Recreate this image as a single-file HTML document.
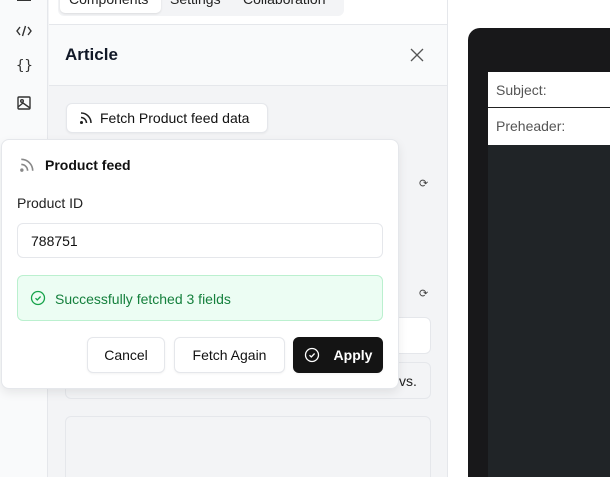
<!DOCTYPE html>
<html style="width:610px;height:477px;overflow:hidden"><head><style>
*{box-sizing:border-box;margin:0;padding:0}
body{width:610px;height:477px;overflow:hidden;background:#fff;font-family:"Liberation Sans",sans-serif;position:relative;color:#111}
.abs{position:absolute}
.btn{position:absolute;background:#fff;border:1px solid #e5e7eb;border-radius:6px;font-size:14px;display:flex;align-items:center;justify-content:center;box-shadow:0 1px 2px rgba(0,0,0,.05)}
</style></head><body>
<div class="abs" style="left:0;top:0;width:48px;height:477px;background:#f9fafb;border-right:1px solid #e5e7eb"></div>
<div class="abs" style="left:17px;top:-2px;width:14px;height:3px;border-bottom:2px solid #333"></div>
<svg class="abs" style="left:16px;top:24px" width="16" height="14" viewBox="0 0 16 14" fill="none" stroke="#333" stroke-width="1.4"><path d="M4 3L1 7l3 4M12 3l3 4-3 4M9.5 2L6.5 12"/></svg>
<div class="abs" style="left:16px;top:58px;font-size:14px;color:#333;font-family:'DejaVu Sans Mono',monospace">{}</div>
<svg class="abs" style="left:17px;top:96px" width="14" height="14" viewBox="0 0 14 14" fill="none" stroke="#333" stroke-width="1.4"><rect x="1" y="1" width="12" height="12" rx="1"/><circle cx="5" cy="5" r="1.3"/><path d="M1 11l5-4 7 5"/></svg>
<div class="abs" style="left:48px;top:0;width:400px;height:477px;background:#f3f4f6;border-right:1px solid #e5e7eb"></div>
<div class="abs" style="left:49px;top:0;width:398px;height:25px;background:#fff;border-bottom:1px solid #e5e7eb"></div>
<div class="abs" style="left:58px;top:-6px;width:286px;height:22px;background:#f3f4f6;border-radius:6px"></div>
<div class="abs" style="left:60px;top:-6px;width:101px;height:19px;background:#fff;border-radius:5px;box-shadow:0 1px 2px rgba(0,0,0,.1)"></div>
<div class="abs" style="left:69px;top:-9px;font-size:14px;color:#222">Components</div>
<div class="abs" style="left:170px;top:-9px;font-size:14px;color:#222">Settings</div>
<div class="abs" style="left:243px;top:-9px;font-size:14px;color:#222">Collaboration</div>
<div class="abs" style="left:49px;top:25px;width:398px;height:61px;background:#f9fafb;border-bottom:1px solid #e5e7eb"></div>
<div class="abs" style="left:65px;top:45px;font-size:17px;font-weight:bold;color:#111827">Article</div>
<svg class="abs" style="left:410px;top:48px" width="14" height="14" viewBox="0 0 14 14" stroke="#555" stroke-width="1.3"><path d="M1 1l12 12M13 1L1 13"/></svg>
<div class="btn" style="left:66px;top:103px;width:202px;height:30px;justify-content:flex-start;padding-left:12px"><svg width="14" height="14" viewBox="0 0 14 14" fill="none" stroke="#222" stroke-width="1.5"><circle cx="2.5" cy="11.5" r=".8" fill="#222"/><path d="M2 6.5a5.5 5.5 0 0 1 5.5 5.5M2 2a10 10 0 0 1 10 10"/></svg><span style="margin-left:7px">Fetch Product feed data</span></div>
<div class="abs" style="left:419px;top:177px;font-size:11px;color:#444">⟳</div>
<div class="abs" style="left:419px;top:287px;font-size:11px;color:#444">⟳</div>
<div class="abs" style="left:65px;top:317px;width:366px;height:37px;background:#fff;border:1px solid #e5e7eb;border-radius:6px"></div>
<div class="abs" style="left:65px;top:362px;width:366px;height:37px;background:#f3f4f6;border:1px solid #e5e7eb;border-radius:6px"></div>
<div class="abs" style="left:399px;top:373px;font-size:14px;color:#222">vs.</div>
<div class="abs" style="left:65px;top:416px;width:366px;height:80px;background:#f3f4f6;border:1px solid #e5e7eb;border-radius:6px"></div>
<div class="abs" style="left:468px;top:28px;width:160px;height:470px;background:#18181a;border-radius:12px"></div>
<div class="abs" style="left:488px;top:72px;width:130px;height:36px;background:#fff;border-bottom:1px solid #222;font-size:14px;color:#555;padding:10px 0 0 8px">Subject:</div>
<div class="abs" style="left:488px;top:108px;width:130px;height:37px;background:#fff;font-size:14px;color:#555;padding:10px 0 0 8px">Preheader:</div>
<div class="abs" style="left:488px;top:145px;width:130px;height:340px;background:#202427"></div>
<div class="abs" style="left:1px;top:139px;width:398px;height:250px;background:#fff;border:1px solid #e5e7eb;border-radius:8px;box-shadow:0 4px 10px rgba(0,0,0,.08)"></div>
<svg class="abs" style="left:19px;top:157px" width="16" height="16" viewBox="0 0 14 14" fill="none" stroke="#888" stroke-width="1.4"><circle cx="2.5" cy="11.5" r=".8" fill="#888"/><path d="M2 6.5a5.5 5.5 0 0 1 5.5 5.5M2 2a10 10 0 0 1 10 10"/></svg>
<div class="abs" style="left:45px;top:157px;font-size:14px;font-weight:bold;color:#111">Product feed</div>
<div class="abs" style="left:17px;top:195px;font-size:14px;color:#222">Product ID</div>
<div class="abs" style="left:17px;top:223px;width:366px;height:35px;border:1px solid #e5e7eb;border-radius:6px;font-size:14px;padding:9px 0 0 13px">788751</div>
<div class="abs" style="left:17px;top:275px;width:366px;height:46px;background:#ecfdf3;border:1px solid #bbf0cf;border-radius:6px;font-size:14px;color:#15803d;padding:15px 0 0 37px">Successfully fetched 3 fields</div>
<svg class="abs" style="left:30px;top:290px" width="16" height="16" viewBox="0 0 16 16" fill="none" stroke="#16a34a" stroke-width="1.3"><circle cx="8" cy="8" r="6.5"/><path d="M5.5 8.2l1.8 1.8 3.3-3.5"/></svg>
<div class="btn" style="left:87px;top:337px;width:78px;height:36px">Cancel</div>
<div class="btn" style="left:174px;top:337px;width:111px;height:36px">Fetch Again</div>
<div class="btn" style="left:293px;top:337px;width:90px;height:36px;background:#141414;border-color:#141414;color:#fff;font-weight:bold"><svg width="16" height="16" viewBox="0 0 16 16" fill="none" stroke="#fff" stroke-width="1.3" style="margin-right:14px"><circle cx="8" cy="8" r="6.5"/><path d="M5.5 8.2l1.8 1.8 3.3-3.5"/></svg>Apply</div>
</body></html>
